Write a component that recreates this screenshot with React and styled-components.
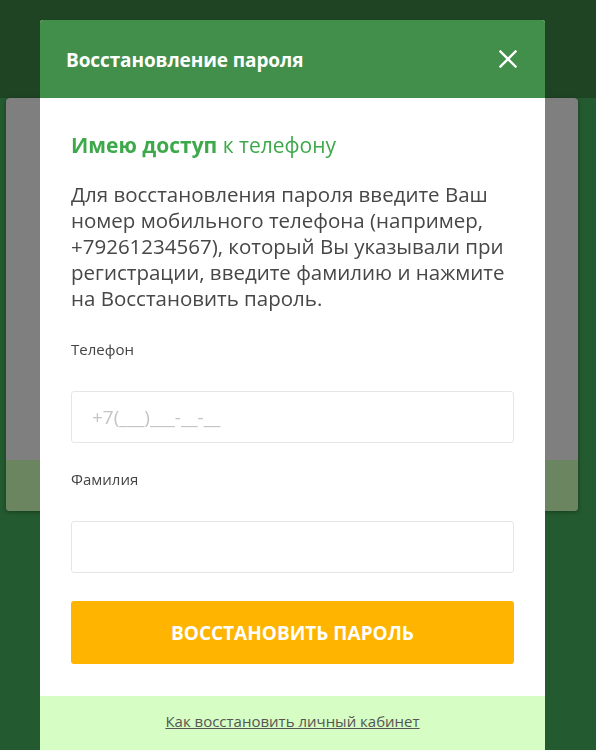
import React from 'react';
import styled, { createGlobalStyle } from 'styled-components';

const Global = createGlobalStyle`
  html, body {
    margin: 0;
    padding: 0;
    height: 100%;
    overflow: hidden;
  }

  body {
    font-family: "Open Sans", "Liberation Sans", sans-serif;
    background: #245a2f;
  }
`;

const Page = styled.div`
  width: 596px;
  height: 750px;
  background: #245a2f;
`;

const TopBar = styled.div`
  height: 98px;
  background: #1f4424;
`;

const BackCard = styled.div`
  margin: 0 18px 0 6px;
  height: 413px;
  border-radius: 4px;
  background: #7f7f7f;
  box-shadow: 0 1px 4px rgba(0, 0, 0, 0.35);
  display: flex;
  flex-direction: column;
  justify-content: flex-end;
  overflow: hidden;
`;

const BackStrip = styled.div`
  height: 51px;
  background: #6a8560;
`;

const Overlay = styled.div`
  position: fixed;
  inset: 0;
  display: flex;
  justify-content: flex-start;
  padding: 20px 0 0 40px;
`;

const Modal = styled.div`
  width: 505px;
  height: 760px;
  background: #fff;
  border-radius: 3px 3px 0 0;
  display: flex;
  flex-direction: column;
  overflow: hidden;
`;

const Header = styled.div`
  height: 78px;
  background: #428f4b;
  display: flex;
  align-items: center;
  justify-content: space-between;
  padding: 0 26px;
  box-sizing: border-box;
  flex-shrink: 0;
`;

const Title = styled.h2`
  margin: 0 0 -2px;
  color: #fff;
  font-size: 19px;
  font-weight: 700;
  letter-spacing: -0.1px;
`;

const Close = styled.button`
  border: 0;
  background: none;
  padding: 0;
  width: 20px;
  height: 20px;
  display: flex;
  align-items: center;
  justify-content: center;
  cursor: pointer;
  margin-right: 1px;
`;

const Body = styled.div`
  padding: 34px 31px 0 31px;
  display: flex;
  flex-direction: column;
  flex-shrink: 0;
`;

const Subtitle = styled.h3`
  margin: 0;
  font-size: 21px;
  line-height: 26px;
  font-weight: 400;
  color: #3ea94b;

  b {
    font-weight: 700;
  }
`;

const Text = styled.p`
  margin: 23px 0 0;
  font-size: 20.5px;
  line-height: 26px;
  color: #474747;
`;

const Label = styled.label`
  display: block;
  font-size: 15px;
  line-height: 20px;
  color: #444;
  margin-top: ${(p) => p.$top}px;
`;

const Input = styled.input`
  display: block;
  margin-top: 32px;
  width: 100%;
  height: 52px;
  box-sizing: border-box;
  border: 1px solid #e6e6e6;
  border-radius: 3px;
  padding: 0 20px;
  font-family: inherit;
  font-size: 19px;
  color: #333;
  outline: none;

  &::placeholder {
    color: #c4c4c4;
  }
`;

const Submit = styled.button`
  margin-top: 28px;
  height: 63px;
  width: 100%;
  border: 0;
  border-radius: 3px;
  background: #ffb400;
  color: #fff;
  font-family: inherit;
  font-size: 19px;
  font-weight: 700;
  text-transform: uppercase;
  cursor: pointer;
`;

const Footer = styled.div`
  margin-top: 32px;
  background: #d6fdc3;
  height: 60px;
  display: flex;
  justify-content: center;
  padding-top: 14px;
  box-sizing: border-box;
  flex-shrink: 0;
`;

const Link = styled.a`
  font-size: 15px;
  line-height: 22px;
  color: #555;
  text-decoration: underline;
`;

function App() {
  return (
    <>
      <Global />
      <Page>
        <TopBar />
        <BackCard>
          <BackStrip />
        </BackCard>
      </Page>
      <Overlay>
        <Modal>
          <Header>
            <Title>Восстановление пароля</Title>
            <Close aria-label="Закрыть">
              <svg width="18" height="18" viewBox="0 0 18 18">
                <path d="M1.5 1.5 L16.5 16.5 M16.5 1.5 L1.5 16.5" stroke="#fff" strokeWidth="2.4" strokeLinecap="square" />
              </svg>
            </Close>
          </Header>
          <Body>
            <Subtitle>
              <b>Имею доступ</b> к телефону
            </Subtitle>
            <Text>
              Для восстановления пароля введите Ваш номер мобильного телефона (например, +79261234567), который Вы указывали при регистрации, введите фамилию и нажмите на Восстановить пароль.
            </Text>
            <Label $top={28}>Телефон</Label>
            <Input placeholder="+7(___)___-__-__" />
            <Label $top={26}>Фамилия</Label>
            <Input />
            <Submit>Восстановить пароль</Submit>
          </Body>
          <Footer>
            <Link href="#">Как восстановить личный кабинет</Link>
          </Footer>
        </Modal>
      </Overlay>
    </>
  );
}

export default App;
